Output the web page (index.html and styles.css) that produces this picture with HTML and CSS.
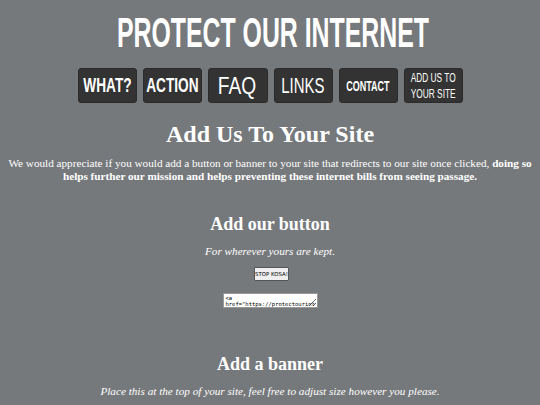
FILE: index.html
```html
<!DOCTYPE html>
<html>
<head>
<meta charset="utf-8">
<link rel="stylesheet" href="styles.css">
</head>
<body>
<header class="header">
  <h1 class="site-title"><span class="squeeze">PROTECT OUR INTERNET</span></h1>
  <nav class="nav">
    <a class="nav-btn nav-what"><span class="squeeze">WHAT?</span></a>
    <a class="nav-btn nav-action"><span class="squeeze">ACTION</span></a>
    <a class="nav-btn nav-faq"><span class="squeeze">FAQ</span></a>
    <a class="nav-btn nav-links"><span class="squeeze">LINKS</span></a>
    <a class="nav-btn nav-contact"><span class="squeeze">CONTACT</span></a>
    <a class="nav-btn nav-add"><span class="squeeze">ADD US TO<br>YOUR SITE</span></a>
  </nav>
</header>
<main class="main">
  <h2 class="page-title">Add Us To Your Site</h2>
  <p class="intro">We would appreciate if you would add a button or banner to your site that redirects to our site once clicked, <b>doing so helps further our mission and helps preventing these internet bills from seeing passage.</b></p>
  <section class="block">
    <h3 class="block-title">Add our button</h3>
    <p class="block-sub">For wherever yours are kept.</p>
    <div class="btn-wrap"><button class="kosa-btn">STOP KOSA!</button></div>
    <div class="code-wrap"><textarea class="code" readonly>&lt;a href="https://protectourinternet.org"&gt;&lt;button&gt;STOP KOSA!&lt;/button&gt;&lt;/a&gt;</textarea></div>
  </section>
  <section class="block block-banner">
    <h3 class="block-title">Add a banner</h3>
    <p class="block-sub">Place this at the top of your site, feel free to adjust size however you please.</p>
  </section>
</main>
</body>
</html>
```

FILE: styles.css
```css
html, body {
  margin: 0;
  padding: 0;
  background: #76797c;
  color: #fff;
}
body {
  font-family: "Liberation Serif", Georgia, serif;
}
.squeeze {
  display: inline-block;
  white-space: nowrap;
  transform-origin: center;
}
.header {
  display: flex;
  flex-direction: column;
  align-items: center;
  padding-top: 11px;
}
.site-title {
  margin: 0;
  padding-left: 6px;
  box-sizing: border-box;
  font-family: "Liberation Sans", Arial, sans-serif;
  font-weight: bold;
  font-size: 43px;
  line-height: 43px;
  color: #fff;
  display: flex;
  justify-content: center;
  width: 100%;
}
.site-title .squeeze { transform: scaleX(0.578); }
.nav {
  display: flex;
  gap: 6px;
  margin-top: 14px;
}
.nav-btn {
  display: flex;
  align-items: center;
  justify-content: center;
  width: 59px;
  height: 35px;
  background: #333333;
  border: 1px solid #2b2b2b;
  border-radius: 3px;
  box-sizing: border-box;
  color: #fff;
  font-family: "Liberation Sans", Arial, sans-serif;
  font-weight: bold;
  text-align: center;
}
.nav-what { font-size: 19.5px; }
.nav-what .squeeze { transform: scaleX(0.7); }
.nav-action { font-size: 19.5px; }
.nav-action .squeeze { transform: scaleX(0.7); }
.nav-faq { width: 60px; font-size: 24px; font-weight: normal; }
.nav-faq .squeeze { transform: scaleX(0.8); }
.nav-links { font-size: 22px; font-weight: normal; }
.nav-links .squeeze { transform: scaleX(0.68); }
.nav-contact { font-size: 14.5px; }
.nav-contact .squeeze { transform: scaleX(0.62); }
.nav-add { font-size: 13px; line-height: 16px; font-weight: normal; }
.nav-add .squeeze { transform: scaleX(0.64); }
.main {
  display: flex;
  flex-direction: column;
  align-items: center;
  text-align: center;
  padding: 0 8px;
}
.page-title {
  margin: 17px 0 0;
  font-size: 24px;
  font-weight: bold;
  line-height: 28px;
}
.intro {
  margin: 9px 0 0;
  font-size: 11.2px;
  line-height: 13px;
}
.block {
  display: flex;
  flex-direction: column;
  align-items: center;
  margin-top: 30px;
}
.block-title {
  margin: 0;
  font-size: 18px;
  line-height: 22px;
}
.block-sub {
  margin: 9px 0 0;
  font-style: italic;
  font-size: 11.2px;
  line-height: 14px;
}
.btn-wrap {
  display: flex;
  justify-content: center;
  margin-top: 9px;
  padding-left: 3px;
}
.kosa-btn {
  width: 35px;
  height: 14px;
  box-sizing: border-box;
  font-family: "DejaVu Sans", sans-serif;
  font-size: 5.4px;
  padding: 0;
  white-space: nowrap;
  background: #efefef;
  color: #000;
  border: 1px solid #555;
  border-radius: 1px;
}
.code-wrap {
  display: flex;
  justify-content: center;
  margin-top: 12px;
}
.code {
  display: block;
  width: 95px;
  height: 15px;
  box-sizing: border-box;
  font-family: "DejaVu Sans Mono", monospace;
  font-size: 5.5px;
  line-height: 6px;
  padding: 1px 1px 1px 2px;
  border: 1px solid #999;
  background: #fff;
  color: #000;
  resize: both;
  overflow: hidden;
  margin: 0;
}
.block-banner { margin-top: 45px; }
```
